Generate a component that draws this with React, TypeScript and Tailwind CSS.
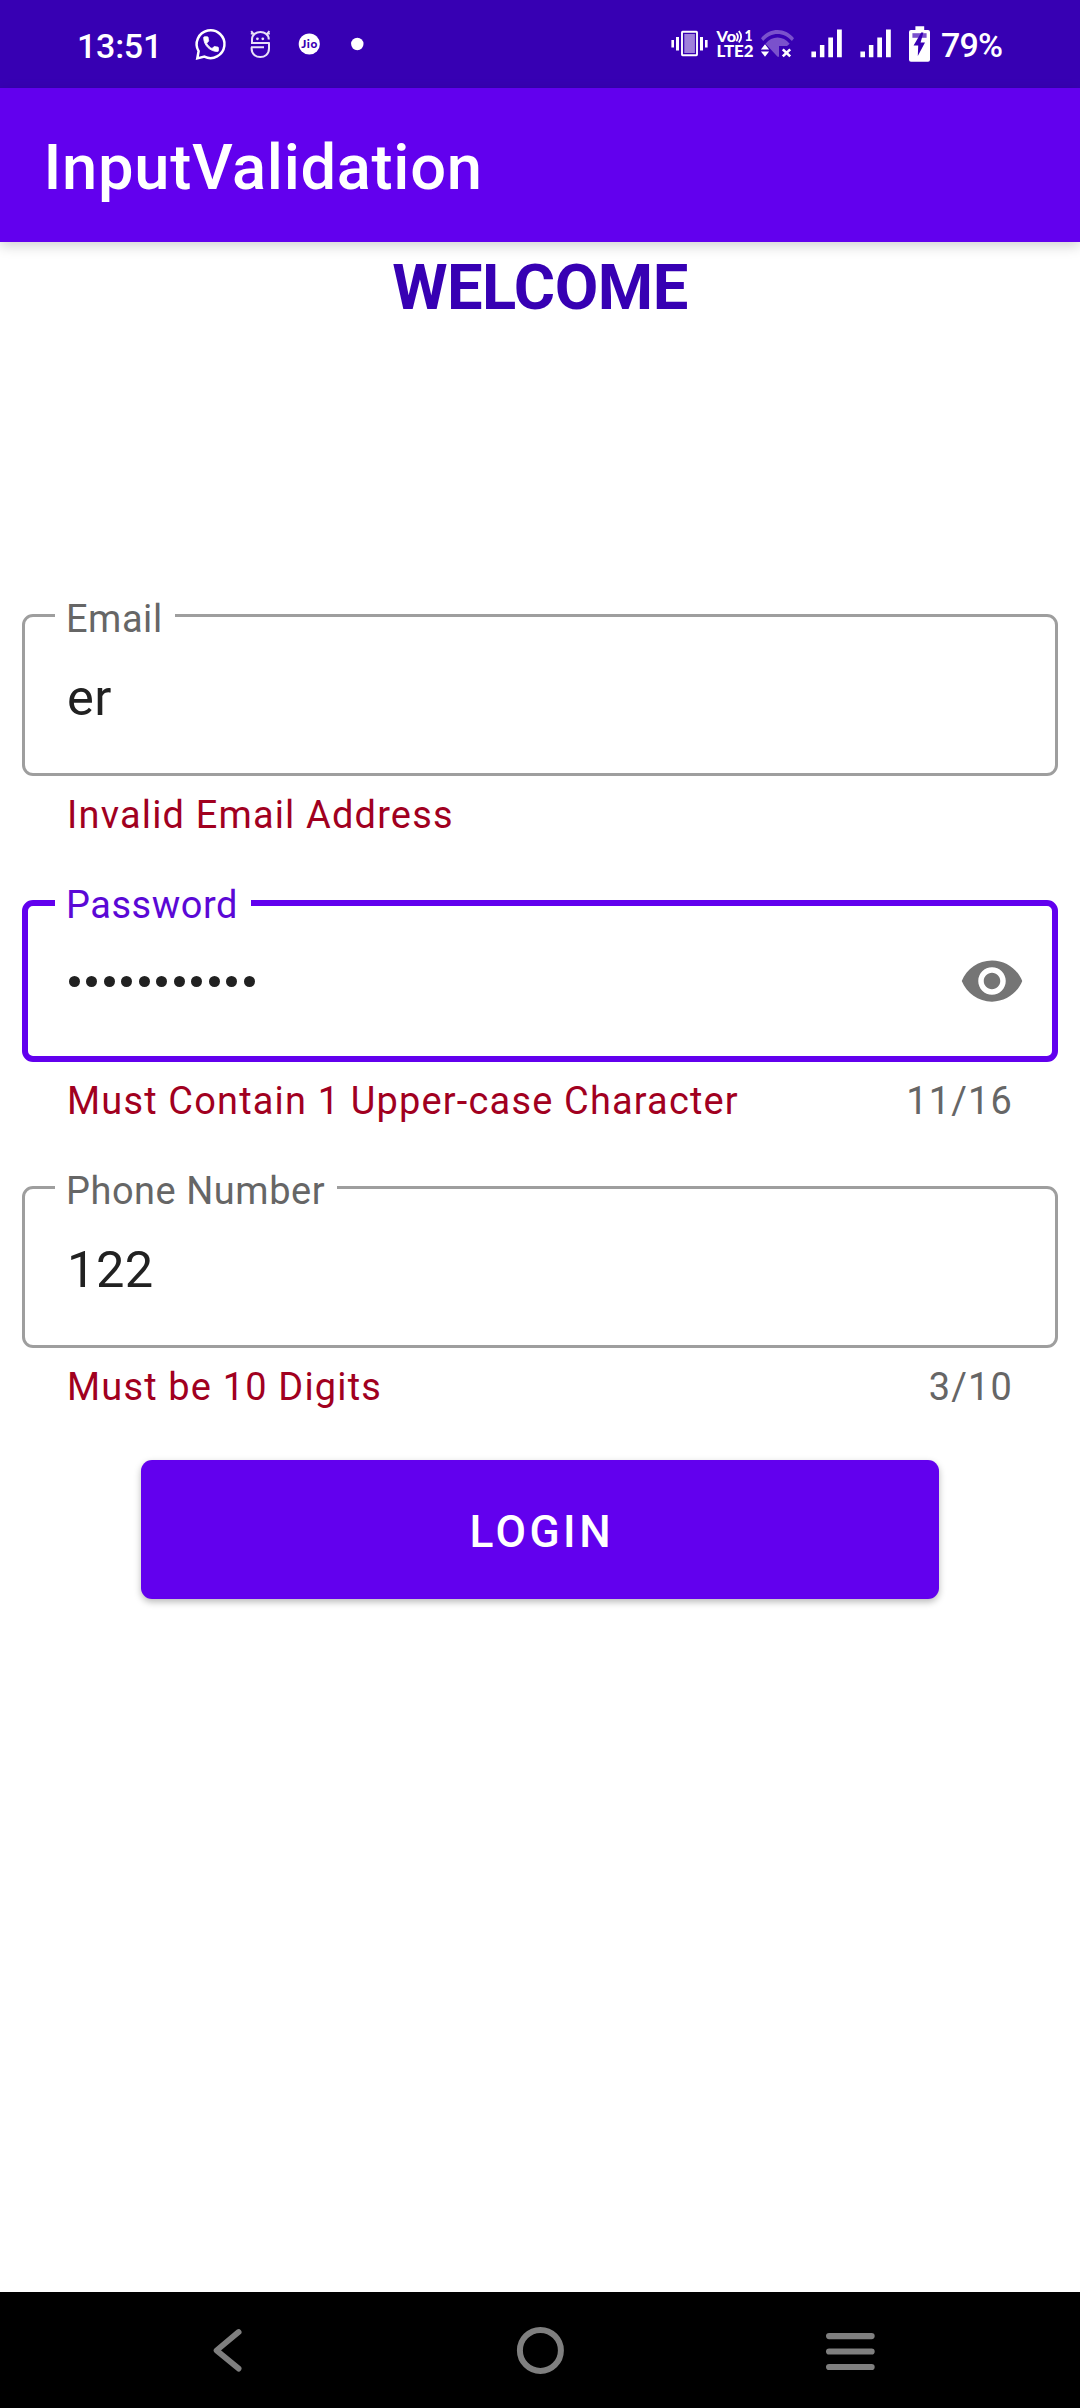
import React from "react";

function SignalBars() {
  return (
    <svg className="h-[36px] w-[32px]" viewBox="0 0 32 36" fill="#fff">
      <path d="M0.4 25.4h4.6v5.8H0.4zM8.9 19h4.5v12.2H8.9zM17.3 11.4h4.7v19.8h-4.7zM26 3.6h4.8v27.6H26z" />
    </svg>
  );
}

function StatusBar() {
  return (
    <header className="flex h-[88px] shrink-0 items-start justify-between bg-[#3700b3] text-white">
      <div className="flex pl-[77px] pt-[26px]">
        <span className="mt-[2px] w-[115px] text-[34px] font-medium leading-[36px] tracking-[-0.25px]">13:51</span>
        <svg className="h-[38px] w-[40px]" viewBox="192 26 40 38" fill="none">
          <path d="M198.6 51.2A13.9 13.9 0 1 1 204.4 56.6L197.3 58.4Z" stroke="#fff" strokeWidth="2.5" />
          <path
            transform="translate(201.2 34.300) scale(0.82)"
            fill="#fff"
            stroke="#fff"
            strokeWidth="1"
            strokeLinejoin="round"
            d="M6.62 10.79c1.44 2.83 3.76 5.14 6.59 6.59l2.2-2.2c.27-.27.67-.36 1.02-.24 1.12.37 2.33.57 3.57.57.55 0 1 .45 1 1V20c0 .55-.45 1-1 1-9.39 0-17-7.61-17-17 0-.55.45-1 1-1h3.5c.55 0 1 .45 1 1 0 1.25.2 2.45.57 3.57.11.35.03.74-.25 1.02z"
          />
        </svg>
        <svg className="ml-[10px] h-[38px] w-[36px]" viewBox="242 26 36 38" fill="none" stroke="#e9e0f8" strokeWidth="2">
          <path d="M252 43.600v-4.200c0-9.800 16.800-9.800 16.800 0" />
          <path d="M251.200 31.200l3 3.600M269.400 31.200l-3 3.600M251.800 31.400v3.200M268.900 31.400v3.200" />
          <path d="M251 43h18.800M251 47.200h13M269 43v5.600c0 11.200-17.400 11.200-17.400 0v-1.400" />
          <circle cx="257.4" cy="38.8" r="1.4" fill="#e9e0f8" stroke="none" />
          <circle cx="262.8" cy="38.8" r="1.4" fill="#e9e0f8" stroke="none" />
        </svg>
        <svg className="ml-[18px] h-[38px] w-[30px]" viewBox="296 26 30 38">
          <circle cx="309.3" cy="44" r="10.6" fill="#fff" />
          <text x="309.3" y="47.8" textAnchor="middle" textLength="16" fontSize="11.8" fontWeight="900" fontFamily="Lato, sans-serif" fill="#3700b3">
            Jio
          </text>
        </svg>
        <svg className="ml-[22px] h-[38px] w-[20px]" viewBox="348 26 20 38">
          <circle cx="357.3" cy="44" r="6.2" fill="#fff" />
        </svg>
      </div>
      <div className="flex pt-[26px]">
        <svg className="h-[38px] w-[42px]" viewBox="670 26 42 38" fill="#fff">
          <path d="M671.4 40h2.6v7.6h-2.6zM676 37h3v13.6h-3zM700 37h3v13.6h-3zM705 40h2.6v7.6H705z" />
          <rect x="682" y="31.8" width="15" height="23.4" rx="0.6" fill="#3700b3" stroke="#fff" strokeWidth="1.9" />
          <rect x="684.3" y="34" width="10.6" height="19" fill="#9f80db" />
        </svg>
        <svg className="h-[38px] w-[44px]" viewBox="712 26 44 38" fill="#fff" fontFamily="Lato, sans-serif" fontWeight="900">
          <text x="716.6" y="42.2" fontSize="14.5" textLength="19.5" lengthAdjust="spacingAndGlyphs">Vo</text>
          <path d="M736.4 33.2q3 3.6 0 8M738.8 31q4.6 5.4 0 11.5" fill="none" stroke="#fff" strokeWidth="1.8" />
          <text x="744.4" y="41" fontSize="15" textLength="8" lengthAdjust="spacingAndGlyphs">1</text>
          <text x="716.6" y="57.2" fontSize="16" textLength="37" lengthAdjust="spacingAndGlyphs">LTE2</text>
        </svg>
        <svg className="h-[38px] w-[42px]" viewBox="756 26 42 38">
          <path d="M761 38.3C769.5 27.3 785.5 27.3 794 38.3L791.9 41C784 31.6 771 31.6 763.2 41Z" fill="#7a51cc" />
          <path d="M765.5 43.8C772 35.3 783 35.3 789.7 43.8L787 46H779V56.8H777.6Z" fill="#7a51cc" />
          <path d="M760.2 50.8L765 44l4.8 6.8-4.8 8Z" fill="#3700b3" />
          <path d="M760.9 49.4l4.1-5.2 4.1 5.2zM760.9 51.4h8.2l-4.1 5.4z" fill="#fff" />
          <path d="M782.8 49.4l7.4 7M790.2 49.4l-7.4 7" stroke="#fff" strokeWidth="2.6" />
        </svg>
        <div className="ml-[13px] flex gap-[17px]">
          <SignalBars />
          <SignalBars />
        </div>
        <svg className="ml-[14px] h-[38px] w-[32px]" viewBox="906 26 32 38">
          <path d="M915.4 26.3h8.8V30h3.8q2 0 2 2v27.7q0 2-2 2h-17q-2 0-2-2V32q0-2 2-2h4.4z" fill="#fff" />
          <path d="M912.4 33.2h14.2v4.6h-14.2z" fill="#7a51cc" />
          <path d="M921.2 32.6l-7.6 13h4.6l-.4 10.4 7.2-13.4h-4.4l2.8-10z" fill="#3700b3" />
        </svg>
        <span className="ml-[3px] mr-[77px] mt-[1px] w-[62px] text-[34px] font-medium leading-[36px] tracking-[-0.8px]">79%</span>
      </div>
    </header>
  );
}

type FieldProps = {
  label: string;
  labelWidth: string;
  error: string;
  counter?: string;
  focused?: boolean;
  children: React.ReactNode;
};

function Field({ label, labelWidth, error, counter, focused, children }: FieldProps) {
  return (
    <div className="h-[286px]">
      <div
        className={`relative flex h-[162px] items-center justify-between rounded-[11px] ${
          focused ? "border-[6px] border-[#6200ee] pl-[38px] pr-[27px]" : "border-[3px] border-[#9e9e9e] pl-[42px]"
        }`}
      >
        <span
          className={`absolute flex h-[44px] items-center bg-white pl-[11px] text-[37.95px] leading-[44px] tracking-[0.55px] ${labelWidth} ${
            focused ? "-top-[23px] left-[27px] text-[#5b08d6]" : "-top-[20px] left-[30px] text-[#666666]"
          }`}
        >
          {label}
        </span>
        {children}
      </div>
      <div className="mt-[17px] flex justify-between pl-[45px] pr-[45px] text-[37.95px] leading-[44px] tracking-[1.18px]">
        <span className="text-[#a1001f]">{error}</span>
        <span className="text-[#666666]">{counter}</span>
      </div>
    </div>
  );
}

export default function App() {
  return (
    <div className="flex h-[2408px] w-[1080px] flex-col overflow-hidden bg-white font-[Roboto,sans-serif]">
      <StatusBar />
      <div className="flex h-[154px] shrink-0 items-center bg-[#6200ee] pl-[43.5px] pt-[4px] shadow-[0_4px_12px_rgba(0,0,0,0.18)]">
        <h1 className="text-[63.25px] font-medium leading-[74px] tracking-[0.7px] text-white">InputValidation</h1>
      </div>
      <main className="flex flex-1 flex-col px-[22px]">
        <h2 className="mt-[8px] h-[74px] text-center text-[63.25px] font-bold leading-[74px] tracking-[-0.5px] text-[#3700b3]">WELCOME</h2>
        <form className="mt-[290px] flex flex-col">
          <Field label="Email" labelWidth="w-[120px]" error="Invalid Email Address">
            <span className="mt-[6px] text-[50.6px] leading-[60px] tracking-[0.45px] text-[#212121]">er</span>
          </Field>
          <Field label="Password" labelWidth="w-[196px]" error="Must Contain 1 Upper-case Character" counter="11/16" focused>
            <span className="flex gap-[6.7px] pl-[3px]">
              {Array.from({ length: 11 }, (_, i) => (
                <span key={i} className="h-[11px] w-[10.8px] rounded-full bg-[#212121]" />
              ))}
            </span>
            <svg className="h-[66px] w-[66px]" viewBox="0 0 24 24" fill="#757575">
              <path d="M12 4.5C7 4.5 2.73 7.61 1 12c1.73 4.39 6 7.5 11 7.5s9.27-3.11 11-7.5c-1.73-4.39-6-7.5-11-7.5zM12 17c-2.76 0-5-2.24-5-5s2.24-5 5-5 5 2.24 5 5-2.24 5-5 5zm0-8c-1.66 0-3 1.34-3 3s1.34 3 3 3 3-1.34 3-3-1.34-3-3-3z" />
            </svg>
          </Field>
          <Field label="Phone Number" labelWidth="w-[282px]" error="Must be 10 Digits" counter="3/10">
            <span className="mt-[6px] text-[50.6px] leading-[60px] tracking-[0.45px] text-[#212121]">122</span>
          </Field>
          <button
            type="button"
            className="-mt-[12px] ml-[118.5px] h-[139px] w-[798.5px] rounded-[11px] bg-[#6200ee] pl-[4px] pt-[4px] text-[44.27px] font-medium leading-[52px] tracking-[3.5px] text-white shadow-[0_3px_7px_rgba(0,0,0,0.28)]"
          >
            LOGIN
          </button>
        </form>
      </main>
      <nav className="flex h-[116px] shrink-0 items-center justify-between bg-black pl-[200px] pr-[200px]">
        <svg className="h-[60px] w-[60px]" viewBox="200 2320 60 60" fill="none" stroke="#7f7f7f" strokeWidth="5.8" strokeLinecap="round" strokeLinejoin="round">
          <path d="M238.6 2332l-22 18.4 22 18.2" />
        </svg>
        <svg className="h-[60px] w-[60px]" viewBox="510 2320 60 60" fill="none" stroke="#7f7f7f" strokeWidth="6">
          <circle cx="540.4" cy="2350.4" r="20.5" />
        </svg>
        <svg className="h-[60px] w-[60px]" viewBox="820 2320 60 60" stroke="#7f7f7f" strokeWidth="6.2" strokeLinecap="round">
          <path d="M829.1 2336.100h42.500M829.1 2351.500h42.500M829.1 2367h42.500" />
        </svg>
      </nav>
    </div>
  );
}
